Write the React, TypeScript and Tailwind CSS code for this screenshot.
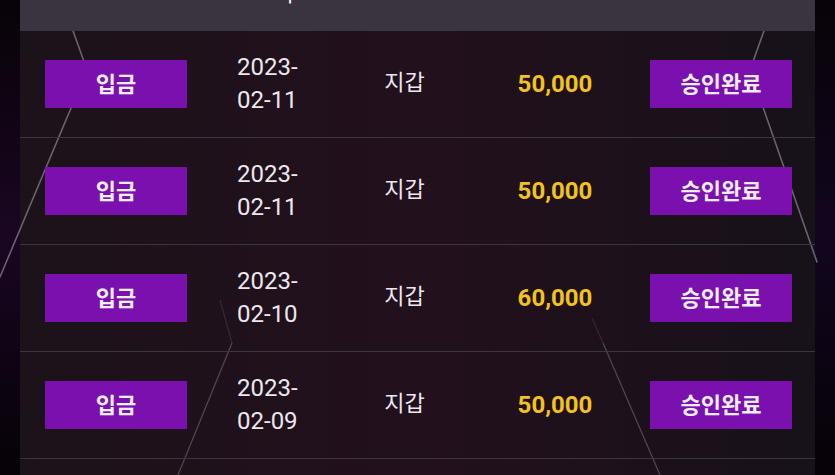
import React from 'react';

interface HistoryRow {
  type: string;
  date: string;
  wallet: string;
  amount: string;
  status: string;
}

const rows: HistoryRow[] = [
  { type: '입금', date: '2023-02-11', wallet: '지갑', amount: '50,000', status: '승인완료' },
  { type: '입금', date: '2023-02-11', wallet: '지갑', amount: '50,000', status: '승인완료' },
  { type: '입금', date: '2023-02-10', wallet: '지갑', amount: '60,000', status: '승인완료' },
  { type: '입금', date: '2023-02-09', wallet: '지갑', amount: '50,000', status: '승인완료' },
];

// 배경 장식 라인 (경기장 느낌의 사선)
function BackdropLines() {
  return (
    <svg
      className="absolute inset-0 z-0 pointer-events-none"
      width="835"
      height="475"
      viewBox="0 0 835 475"
    >
      <g fill="none" stroke="#6a6270" strokeWidth="1.6" strokeLinecap="round">
        <polyline points="62,0 87,70 0,277" />
        <polyline points="775,0 750,70 817,262" />
      </g>
      <g fill="none" stroke="#5a5260" strokeWidth="1.3">
        <polyline points="232,343 178,475" strokeOpacity="0.8" />
        <polyline points="603,343 660,475" strokeOpacity="0.8" />
        <polyline points="220,300 232,343" strokeOpacity="0.35" />
        <polyline points="592,318 603,343" strokeOpacity="0.35" />
      </g>
    </svg>
  );
}

function Row({ row }: { row: HistoryRow }) {
  const [y, m, d] = row.date.split('-');
  return (
    <div className="relative z-10 flex items-center h-[107px] border-b border-[#3b3441] pl-[25px]">
      <div className="w-[142px] h-[48px] bg-[#7a11ae] flex items-center justify-center text-[22px] font-bold text-[#f3eef5]">
        {row.type}
      </div>
      <div className="ml-[50px] w-[110px] text-[24px] leading-[33px] text-[#ece8ee] -mt-[1px]">
        <div>{y}-</div>
        <div>{m}-{d}</div>
      </div>
      <div className="w-[115px] text-center text-[22px] text-[#ece8ee] -mt-[4px]">{row.wallet}</div>
      <div className="w-[186px] text-center text-[24px] font-bold text-[#f2c318]">{row.amount}</div>
      <div className="ml-[2px] w-[142px] h-[48px] bg-[#7a11ae] flex items-center justify-center text-[22px] font-bold text-[#f3eef5]">
        {row.status}
      </div>
    </div>
  );
}

export default function App() {
  return (
    <div
      className="relative w-[835px] h-[475px] overflow-hidden flex bg-[#060207]"
      style={{ fontFamily: "Roboto, 'Noto Sans CJK KR', sans-serif" }}
    >
      <div className="w-[20px] h-full bg-gradient-to-b from-[#080308] via-[#1a0622] to-[#060207]" />

      <main className="w-[795px] h-full bg-gradient-to-r from-[#1c1219] via-[#22101d] to-[#171119]">
        {/* 헤더 (대부분 화면 밖으로 잘림) */}
        <div className="relative z-20 h-[31px] bg-[#3a3440] overflow-hidden">
          <div className="absolute left-[236px] top-[-16px] text-[21px] leading-[21px] text-white">
            <span className="text-transparent">일</span>자
          </div>
        </div>
        {rows.map((r, i) => (
          <Row key={i} row={r} />
        ))}
      </main>

      <div className="w-[20px] h-full bg-gradient-to-b from-[#080308] via-[#12061f] to-[#060207]" />

      <BackdropLines />
    </div>
  );
}
